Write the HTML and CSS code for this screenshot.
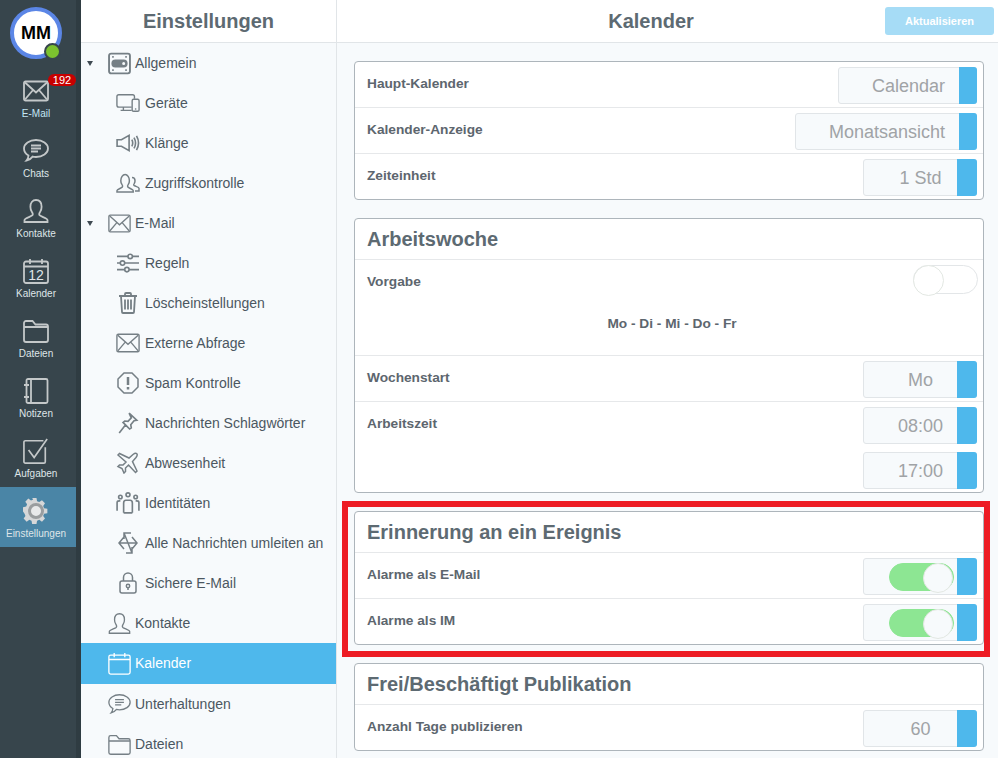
FILE: index.html
```html
<!DOCTYPE html>
<html lang="de">
<head>
    <meta charset="UTF-8">
    <title>Einstellungen - Kalender</title>
    <link rel="stylesheet" href="styles.css">
</head>
<body>
    <svg class="icon-defs" width="0" height="0">
        <defs>
            <symbol id="i-mail" viewBox="0 0 26 21">
                <rect x="1" y="1" width="24" height="19" rx="1.500"/>
                <path d="M2 2l11 10L24 2M2 19l8-9.500M24 19l-8-9.500"/>
            </symbol>
            <symbol id="i-chat" viewBox="0 0 26 24">
                <path d="M13 1c6.600 0 12 3.700 12 8.500S19.600 18 13 18c-1.200 0-2.300-.1-3.400-.4-1.300 1.800-3.300 3.400-6.100 3.900 1.200-1.400 1.900-3 2-5C2.900 15 1 12.500 1 9.500 1 4.700 6.400 1 13 1z"/>
                <path d="M8 6.500h10M8 9.500h10M8 12.500h7"/>
            </symbol>
            <symbol id="i-user" viewBox="0 0 26 24">
                <path d="M1.500 23v-2c0-1.700 6-3.200 7.700-4.600 1-.9.500-2.400-.4-3.700-1-1.400-1.400-3-1.400-5C7.400 3.500 9.700 1 13 1s5.600 2.500 5.600 6.700c0 2-.4 3.600-1.400 5-.9 1.300-1.400 2.800-.4 3.700 1.700 1.400 7.700 2.900 7.700 4.600v2z"/>
            </symbol>
            <symbol id="i-cal" viewBox="0 0 26 26">
                <rect x="1" y="3.500" width="24" height="21.500" rx="2"/>
                <path d="M1 8.500h24M7 1v5M19 1v5"/>
            </symbol>
            <symbol id="i-folder" viewBox="0 0 26 24">
                <path d="M1 21V4c0-1.100.9-2 2-2h6.500l3 3.500H23c1.100 0 2 .9 2 2V21c0 1.100-.9 2-2 2H3c-1.100 0-2-.9-2-2zM1 8h24"/>
            </symbol>
            <symbol id="i-note" viewBox="0 0 26 26">
                <rect x="3.500" y="1" width="21" height="24" rx="1.500"/>
                <path d="M8 1v24M1 7h5M1 19h5"/>
            </symbol>
            <symbol id="i-task" viewBox="0 0 28 28">
                <path d="M24 10v15.500c0 .8-.7 1.500-1.500 1.500h-20c-.8 0-1.500-.7-1.500-1.500v-21C1 3.700 1.700 3 2.500 3H22"/>
                <path d="M6 13l6 8L26 1"/>
            </symbol>
            <symbol id="i-gear" viewBox="0 0 26 26">
                <path d="M10.500 0h5l.7 3.700 2.500 1 3.100-2.100 3.500 3.500-2.100 3.100 1 2.500 3.800.7v5l-3.800.7-1 2.500 2.100 3.100-3.500 3.500-3.100-2.100-2.500 1-.7 3.800h-5l-.7-3.800-2.500-1-3.100 2.100-3.500-3.500 2.100-3.100-1-2.500L0 15.500v-5l3.700-.7 1-2.500-2.100-3.100 3.500-3.500 3.100 2.100 2.500-1z" transform="scale(.87)"/>
            </symbol>
            <symbol id="i-general" viewBox="0 0 22 21">
                <rect x="1" y="1" width="20" height="19" rx="2" stroke-width="1.800"/>
                <rect x="4" y="7.500" width="14" height="6" rx="3" fill="currentColor"/>
                <circle cx="15" cy="10.500" r="2.200" fill="#f7fafc"/>
                <path d="M4 4.200h1.500M16.500 4.200H18M4 16.800h1.500M16.500 16.800H18" stroke-width="1.800"/>
            </symbol>
            <symbol id="i-device" viewBox="0 0 26 20">
                <path d="M17 14.500H3c-1.100 0-2-.9-2-2V3c0-1.100.9-2 2-2h15c1.100 0 2 .9 2 2v2.500M8 14.500v3M5 18h12"/>
                <rect x="17.500" y="6" width="7.500" height="13" rx="1.500"/>
                <path d="M20.500 16.500h1.500"/>
            </symbol>
            <symbol id="i-sound" viewBox="0 0 22 18">
                <path d="M1 6h4l7-4v14l-7-4H1zM14.500 6c1 1.800 1 4.200 0 6M16.500 4c1.700 3 1.700 7 0 10M18.800 2.500c2.300 4 2.300 9 0 13"/>
            </symbol>
            <symbol id="i-access" viewBox="0 0 24 20">
                <path d="M1 19v-1.500c0-1.300 4.300-2.300 5.300-3.400.7-.7.300-1.700-.4-2.700-.7-1-1.100-2.200-1.100-3.600 0-3.300 1.900-6.300 4.300-6.300s4.300 3 4.300 6.300c0 1.400-.4 2.600-1.100 3.600-.7 1-1.100 2-.4 2.700 1 1.100 5.300 2.100 5.300 3.400V19z"/>
                <path d="M16 4.500c1.700 0 3 1.300 3 3.200 0 1.200-.3 2.100-.8 2.900-.5.700-.7 1.300-.2 1.800.9.800 5 1.600 5 2.800V18h-4"/>
            </symbol>
            <symbol id="i-rules" viewBox="0 0 20 20">
                <path d="M0 4h10M14 4h6M0 10h3M7 10h13M0 16h7M11 16h9"/>
                <circle cx="12" cy="4" r="2"/>
                <circle cx="5" cy="10" r="2"/>
                <circle cx="9" cy="16" r="2"/>
            </symbol>
            <symbol id="i-trash" viewBox="0 0 20 22">
                <path d="M1 4h18M7 4V2c0-.5.500-1 1-1h4c.5 0 1 .5 1 1v2M3 4l1 16c0 .6.500 1 1 1h10c.5 0 1-.4 1-1l1-16M7 7.500v10M10 7.500v10M13 7.500v10" stroke-width="1.800"/>
            </symbol>
            <symbol id="i-spam" viewBox="0 0 22 22">
                <path d="M7 1h8l6 6v8l-6 6H7l-6-6V7z"/>
                <path d="M11 5v8M11 15v2.500" stroke-width="2.500"/>
            </symbol>
            <symbol id="i-pin" viewBox="0 0 18 20">
                <path d="M10 1l7 6.500-2.500.5-3 3.500.5 3-1.500 1-6-6 1.500-1.300 3 .3 3-3.200zM6.500 12L1 19"/>
            </symbol>
            <symbol id="i-plane" viewBox="0 0 22 22">
                <path d="M1 3l1.500-1.500L12 6l4-3.500c1.300-1 3-1.500 3.800-.8.700.8.200 2.500-.8 3.800L15.500 9.500l4.500 9.500-1.500 1.500-7-7.500-3 3v3.500L7 21l-2-4.500-4-2L2.500 13H6l3-3z"/>
            </symbol>
            <symbol id="i-people" viewBox="0 0 22 20">
                <circle cx="11" cy="2.500" r="1.800"/>
                <circle cx="4" cy="4.500" r="1.600"/>
                <circle cx="18" cy="4.500" r="1.600"/>
                <path d="M7 19V10c0-1.500 1-2.500 2-2.500h4c1 0 2 1 2 2.500v9M1 17V9.500C1 8.500 2 8 3 8h1M21 17V9.500c0-1-1-1.500-2-1.500h-1M7 19h8"/>
            </symbol>
            <symbol id="i-forward" viewBox="0 0 20 22">
                <path d="M6 5l-5 6 5 6M14 5l5 6-5 6M1 11h18M6 7V1h7M6 1l8 20M14 15v6H8"/>
            </symbol>
            <symbol id="i-lock" viewBox="0 0 18 22">
                <rect x="1" y="9" width="16" height="12" rx="2"/>
                <path d="M4.500 9V5.500C4.500 3 6.500 1 9 1s4.500 2 4.500 4.500V9"/>
                <circle cx="9" cy="14" r="1.700"/>
                <path d="M9 15.700V18"/>
            </symbol>
        </defs>
    </svg>

    <div class="app">
        <nav class="rail">
            <div class="avatar-wrap">
                <div class="avatar">MM</div>
                <span class="presence"></span>
            </div>
            <a class="rail-item">
                <svg class="rail-icon"><use href="#i-mail"/></svg>
                <span class="rail-label rail-label-mail">E-Mail</span>
                <span class="badge">192</span>
            </a>
            <a class="rail-item">
                <svg class="rail-icon"><use href="#i-chat"/></svg>
                <span class="rail-label">Chats</span>
            </a>
            <a class="rail-item">
                <svg class="rail-icon"><use href="#i-user"/></svg>
                <span class="rail-label">Kontakte</span>
            </a>
            <a class="rail-item">
                <svg class="rail-icon"><use href="#i-cal"/></svg>
                <span class="cal-day">12</span>
                <span class="rail-label">Kalender</span>
            </a>
            <a class="rail-item">
                <svg class="rail-icon"><use href="#i-folder"/></svg>
                <span class="rail-label">Dateien</span>
            </a>
            <a class="rail-item">
                <svg class="rail-icon"><use href="#i-note"/></svg>
                <span class="rail-label">Notizen</span>
            </a>
            <a class="rail-item">
                <svg class="rail-icon"><use href="#i-task"/></svg>
                <span class="rail-label">Aufgaben</span>
            </a>
            <a class="rail-item active">
                <svg class="rail-icon gear"><use href="#i-gear"/></svg>
                <span class="gear-hole"></span>
                <span class="rail-label">Einstellungen</span>
            </a>
        </nav>

        <aside class="sidebar">
            <header class="bar"><h1>Einstellungen</h1></header>
            <ul class="tree">
                <li class="top"><span class="caret"></span><svg class="ti"><use href="#i-general"/></svg>Allgemein</li>
                <li class="sub"><svg class="si"><use href="#i-device"/></svg>Geräte</li>
                <li class="sub"><svg class="si"><use href="#i-sound"/></svg>Klänge</li>
                <li class="sub"><svg class="si"><use href="#i-access"/></svg>Zugriffskontrolle</li>
                <li class="top"><span class="caret"></span><svg class="ti"><use href="#i-mail"/></svg>E-Mail</li>
                <li class="sub"><svg class="si"><use href="#i-rules"/></svg>Regeln</li>
                <li class="sub"><svg class="si"><use href="#i-trash"/></svg>Löscheinstellungen</li>
                <li class="sub"><svg class="si"><use href="#i-mail"/></svg>Externe Abfrage</li>
                <li class="sub"><svg class="si"><use href="#i-spam"/></svg>Spam Kontrolle</li>
                <li class="sub"><svg class="si"><use href="#i-pin"/></svg>Nachrichten Schlagwörter</li>
                <li class="sub"><svg class="si"><use href="#i-plane"/></svg>Abwesenheit</li>
                <li class="sub"><svg class="si"><use href="#i-people"/></svg>Identitäten</li>
                <li class="sub"><svg class="si"><use href="#i-forward"/></svg>Alle Nachrichten umleiten an</li>
                <li class="sub"><svg class="si"><use href="#i-lock"/></svg>Sichere E-Mail</li>
                <li class="top"><svg class="ti"><use href="#i-user"/></svg>Kontakte</li>
                <li class="top current"><svg class="ti"><use href="#i-cal"/></svg>Kalender</li>
                <li class="top"><svg class="ti"><use href="#i-chat"/></svg>Unterhaltungen</li>
                <li class="top"><svg class="ti"><use href="#i-folder"/></svg>Dateien</li>
            </ul>
        </aside>

        <main class="content">
            <header class="bar content-bar">
                <h1>Kalender</h1>
                <button class="update-btn">Aktualisieren</button>
            </header>
            <div class="panels">
                <section class="panel">
                    <div class="row">
                        <label>Haupt-Kalender</label>
                        <div class="select narrow"><span>Calendar</span></div>
                    </div>
                    <div class="row">
                        <label>Kalender-Anzeige</label>
                        <div class="select narrow"><span>Monatsansicht</span></div>
                    </div>
                    <div class="row">
                        <label>Zeiteinheit</label>
                        <div class="select short"><span>1 Std</span></div>
                    </div>
                </section>

                <section class="panel">
                    <h2>Arbeitswoche</h2>
                    <div class="row row-tall">
                        <div class="row-top">
                            <label>Vorgabe</label>
                            <span class="toggle off"></span>
                        </div>
                        <div class="days">Mo - Di - Mi - Do - Fr</div>
                    </div>
                    <div class="row">
                        <label>Wochenstart</label>
                        <div class="select short"><span>Mo</span></div>
                    </div>
                    <div class="row row-times">
                        <label>Arbeitszeit</label>
                        <div class="stack">
                            <div class="select short"><span>08:00</span></div>
                            <div class="select short"><span>17:00</span></div>
                        </div>
                    </div>
                </section>

                <section class="panel marked">
                    <h2>Erinnerung an ein Ereignis</h2>
                    <div class="row">
                        <label>Alarme als E-Mail</label>
                        <div class="select short switch"><span class="toggle on"></span></div>
                    </div>
                    <div class="row">
                        <label>Alarme als IM</label>
                        <div class="select short switch"><span class="toggle on"></span></div>
                    </div>
                </section>

                <section class="panel">
                    <h2>Frei/Beschäftigt Publikation</h2>
                    <div class="row">
                        <label>Anzahl Tage publizieren</label>
                        <div class="select short"><span>60</span></div>
                    </div>
                </section>
            </div>
        </main>
    </div>
</body>
</html>
```

FILE: styles.css
```css
* {
    box-sizing: border-box;
}

html, body {
    margin: 0;
    height: 100%;
    overflow: hidden;
}

body {
    font-family: "Liberation Sans", Arial, sans-serif;
    color: #4b5761;
    background-color: #f7fafc;
}

.icon-defs {
    position: absolute;
}

.app {
    display: flex;
    height: 758px;
}

/* Left rail */
.rail {
    flex: 0 0 81px;
    height: 100%;
    background-color: #37454c;
    border-right: 5px solid #2f3c42;
}

.avatar-wrap {
    position: relative;
    height: 67px;
    padding: 7px 0 0 10px;
}

.avatar {
    width: 52px;
    height: 52px;
    border: 4px solid #5b86e6;
    border-radius: 50%;
    background-color: #fff;
    color: #000;
    font-size: 18px;
    font-weight: bold;
    line-height: 44px;
    text-align: center;
}

.presence {
    position: absolute;
    top: 43px;
    left: 44px;
    width: 17px;
    height: 17px;
    border: 2px solid #37454c;
    border-radius: 50%;
    background-color: #7cc22f;
}

.rail-item {
    position: relative;
    display: flex;
    flex-direction: column;
    align-items: center;
    width: 76px;
    height: 60px;
    padding: 11px 4px 0 0;
    color: #cdd2d4;
}

.rail-icon {
    width: 26px;
    height: 26px;
    fill: none;
    stroke: currentColor;
    stroke-width: 1.800;
    color: #c4c8c9;
}

.rail-label {
    margin-top: 3px;
    font-size: 10px;
    line-height: 13px;
    color: #dfe5e8;
}

.rail-label-mail {
    color: #c4e6f5;
}

.badge {
    position: absolute;
    top: 7px;
    left: 48px;
    width: 28px;
    height: 12px;
    border-radius: 6px;
    background-color: #c80000;
    color: #fff;
    font-size: 11px;
    line-height: 12px;
    text-align: center;
}

.cal-day {
    position: absolute;
    top: 20px;
    left: 0;
    width: 72px;
    color: #dfe5e8;
    font-size: 14px;
    line-height: 16px;
    text-align: center;
}

.rail-item.active {
    background-color: #4a85a6;
}

.rail-icon.gear {
    fill: #d6d7d8;
    stroke: none;
}

.gear-hole {
    position: absolute;
    top: 16px;
    left: 28px;
    width: 16px;
    height: 16px;
    border: 3px solid #9a9d9f;
    border-radius: 50%;
    background-color: #e8e9ea;
}

/* Shared header bar */
.bar {
    display: flex;
    align-items: center;
    justify-content: center;
    height: 43px;
    border-bottom: 1px solid #e1e5e8;
    background-color: #fff;
}

.bar h1 {
    margin: 0;
    color: #5d6a72;
    font-size: 20px;
    font-weight: bold;
}

/* Settings tree */
.sidebar {
    flex: 0 0 256px;
    height: 100%;
    border-right: 1px solid #e1e5e8;
}

.tree {
    margin: 0;
    padding: 0;
    list-style: none;
}

.tree li {
    position: relative;
    display: flex;
    align-items: center;
    height: 40px;
    font-size: 14px;
    white-space: nowrap;
}

.tree svg {
    flex: none;
    fill: none;
    stroke: #757f85;
    stroke-width: 1.500;
    color: #757f85;
}

.top {
    padding-left: 27px;
}

.sub {
    padding-left: 35px;
}

.ti {
    width: 23px;
    height: 23px;
    margin-right: 4px;
}

.si {
    width: 24px;
    height: 22px;
    margin-right: 5px;
}

.caret {
    position: absolute;
    left: 6px;
    top: 18px;
    border-top: 5px solid #3f4a52;
    border-left: 3.500px solid transparent;
    border-right: 3.500px solid transparent;
}

.tree .current {
    height: 41px;
    padding-bottom: 1px;
    background-color: #4eb8ec;
    color: #fff;
}

.tree .current svg {
    stroke: #fff;
}

/* Main column */
.content {
    flex: 1;
    min-width: 0;
    height: 100%;
}

.content-bar {
    position: relative;
    padding-right: 33px;
}

.update-btn {
    position: absolute;
    top: 7px;
    right: 4px;
    width: 109px;
    height: 28px;
    border: none;
    border-radius: 3px;
    background-color: #a6dcf6;
    color: #fff;
    font-family: inherit;
    font-size: 11px;
    font-weight: bold;
}

.panels {
    display: flex;
    flex-direction: column;
    gap: 18px;
    padding: 18px 14px 0 17px;
}

.panel {
    position: relative;
    border: 1px solid #adb5bb;
    border-radius: 4px;
    background-color: #fff;
}

.panel h2 {
    margin: 0;
    padding: 0 12px;
    color: #5d6a72;
    font-size: 20px;
    font-weight: bold;
    line-height: 40px;
    height: 40px;
}

.panel.marked::after {
    content: "";
    position: absolute;
    top: -11px;
    left: -13px;
    right: -7px;
    bottom: -13px;
    border: 6px solid #ed1c24;
    pointer-events: none;
}

.row {
    display: flex;
    justify-content: space-between;
    height: 46px;
    padding: 5px 6px 0 12px;
    border-top: 1px solid #e6e8ea;
}

.panel > .row:first-child {
    border-top: none;
    height: 45px;
}

.row label {
    padding-top: 9px;
    color: #5d666e;
    font-size: 13.700px;
    font-weight: bold;
}

.row-tall {
    display: block;
    height: 96px;
}

.row-top {
    display: flex;
    justify-content: space-between;
}

.days {
    margin-top: 22px;
    color: #5d666e;
    font-size: 13.700px;
    font-weight: bold;
    text-align: center;
}

.row-times {
    height: 91px;
}

.stack {
    display: flex;
    flex-direction: column;
    gap: 8px;
}

.select {
    position: relative;
    height: 37px;
    border: 1px solid #e1e5e8;
    border-radius: 3px;
    background-color: #f7fafc;
    color: #a0a3a6;
    font-size: 18px;
    line-height: 37px;
}

.select::after {
    content: "";
    position: absolute;
    top: -1px;
    right: -1px;
    bottom: -1px;
    width: 20px;
    border-radius: 0 3px 3px 0;
    background-color: #4eb8ec;
}

.narrow {
    padding: 0 31px 0 33px;
}

.narrow::after {
    width: 18px;
}

.short {
    width: 114px;
    padding-left: 20px;
    padding-right: 19px;
    text-align: center;
}

.switch {
    padding: 4px 0 0 25px;
    line-height: 0;
}

.toggle {
    display: block;
    position: relative;
    width: 65px;
    height: 28px;
    border: 1px solid #e3e6e8;
    border-radius: 15px;
    background-color: #fff;
}

.toggle::after {
    content: "";
    position: absolute;
    top: -1px;
    width: 28px;
    height: 28px;
    border: 1px solid #e3e8e3;
    border-radius: 50%;
    background-color: #fff;
}

.toggle.off {
    height: 29px;
    margin-right: -1px;
}

.toggle.off::after {
    left: -1px;
    width: 29px;
    height: 29px;
}

.toggle.on {
    border-color: #8de693;
    background-color: #8de693;
}

.toggle.on::after {
    right: 0;
    background-color: #f7fafc;
}
```
